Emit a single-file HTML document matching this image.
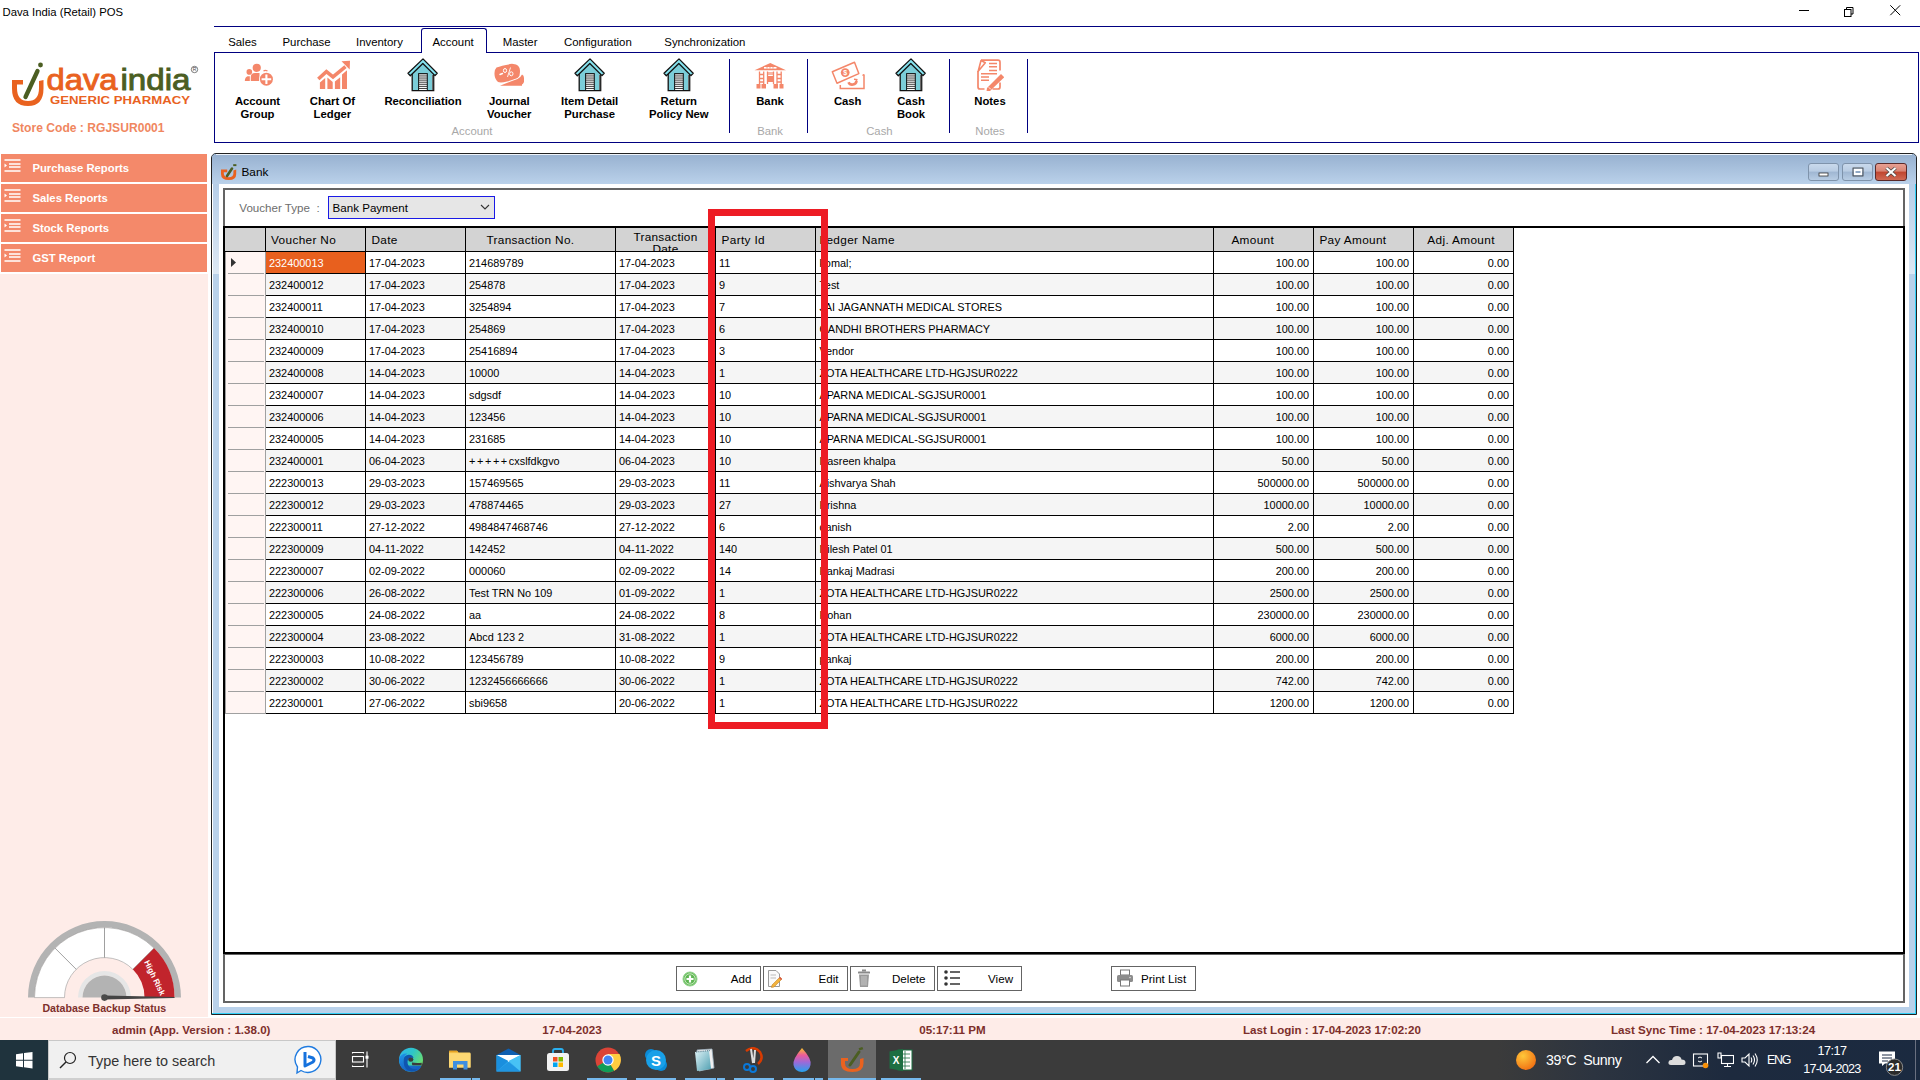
<!DOCTYPE html><html><head><meta charset="utf-8"><style>
html,body{margin:0;padding:0;width:1920px;height:1080px;overflow:hidden;background:#fff;}
body{position:relative;font-family:"Liberation Sans",sans-serif;}
.t{position:absolute;white-space:pre;}
.r{position:absolute;}
</style></head><body>
<div class="t" style="left:2.5px;top:6.73px;font-size:11.3px;line-height:11.3px;color:#000;font-weight:400;">Dava India (Retail) POS</div>
<div class="r" style="left:1799px;top:10px;width:10px;height:1px;background:#000"></div>
<svg class="r" style="left:1842px;top:4px" width="14" height="14" viewBox="0 0 14 14"><rect x="2.5" y="5.5" width="6.5" height="7" fill="none" stroke="#000" stroke-width="1"/><path d="M4.5 5.5 V3.5 H11 V10 H9" fill="none" stroke="#000" stroke-width="1"/></svg>
<svg class="r" style="left:1887px;top:3px" width="16" height="16" viewBox="0 0 16 16"><path d="M3.3 2.3 L13.2 12.2 M13.2 2.3 L3.3 12.2" stroke="#000" stroke-width="1"/></svg>
<div class="r" style="left:214px;top:26px;width:1706px;height:1px;background:#000080"></div>
<div class="r" style="left:214px;top:52px;width:1705px;height:91px;border:1px solid #000080;box-sizing:border-box;"></div>
<div class="r" style="left:421px;top:28px;width:66px;height:25px;border:1px solid #000080;border-bottom:none;border-radius:3px 3px 0 0;background:#fff;box-sizing:border-box"></div>
<div class="t" style="left:228.2px;top:36.95px;font-size:11.4px;line-height:11.4px;color:#000;font-weight:400;">Sales</div>
<div class="t" style="left:282.5px;top:36.95px;font-size:11.4px;line-height:11.4px;color:#000;font-weight:400;">Purchase</div>
<div class="t" style="left:356px;top:36.95px;font-size:11.4px;line-height:11.4px;color:#000;font-weight:400;">Inventory</div>
<div class="t" style="left:432.5px;top:36.95px;font-size:11.4px;line-height:11.4px;color:#000;font-weight:400;">Account</div>
<div class="t" style="left:502.7px;top:36.95px;font-size:11.4px;line-height:11.4px;color:#000;font-weight:400;">Master</div>
<div class="t" style="left:564px;top:36.95px;font-size:11.4px;line-height:11.4px;color:#000;font-weight:400;">Configuration</div>
<div class="t" style="left:664.3px;top:36.95px;font-size:11.4px;line-height:11.4px;color:#000;font-weight:400;">Synchronization</div>
<svg class="r" style="left:244px;top:61px" width="30" height="27" viewBox="0 0 30 27">
<circle cx="12.75" cy="6.8" r="4.1" fill="#f4876a"/>
<path d="M6.8 20 V16 Q6.8 12 11 12 H15.5 V20 Z" fill="#f4876a"/>
<circle cx="5.3" cy="10.9" r="2.8" fill="#f4876a"/>
<path d="M0.8 20 Q0.8 16.5 3.5 15.2 H5.8 V20 Z" fill="#f4876a"/>
<path d="M19.5 10.2 Q21 8.6 23.5 10" fill="none" stroke="#f4876a" stroke-width="1.2"/>
<circle cx="22.4" cy="18.2" r="7.4" fill="#fff"/>
<circle cx="22.4" cy="18.2" r="6.5" fill="#f4876a"/>
<path d="M22.4 13.4 V23 M17.6 18.2 H27.2" stroke="#fff" stroke-width="2.1"/></svg>
<svg class="r" style="left:317px;top:60px" width="34" height="30" viewBox="0 0 34 30">
<path d="M2.9 29 V22.5 L8.2 18 V29 Z M10.4 29 V17.5 L15.7 22 V29 Z M17.9 29 V21.5 L23.2 17.2 V29 Z M25 29 V14.5 L30 10.3 V29 Z" fill="#f4876a"/>
<path d="M1.3 19 L9.4 11.6 L16 16.9 L28.5 6.7" fill="none" stroke="#fff" stroke-width="6.5" stroke-linejoin="miter"/>
<path d="M1.3 19 L9.4 11.6 L16 16.9 L28.5 6.7" fill="none" stroke="#f4876a" stroke-width="3.6" stroke-linejoin="miter"/>
<path d="M24.5 1.3 L33 0.8 L32.7 9.5 Z" fill="#f4876a"/></svg>
<svg class="r" style="left:400px;top:55px" width="45" height="40" viewBox="0 0 45 40">
<path d="M12.2 17 L22.8 6.5 L33.7 17 V35.7 H12.2 Z" fill="#7bcdd8" stroke="#111" stroke-width="1.3"/>
<rect x="32" y="20" width="1.2" height="15" fill="#6a6a6a"/>
<path d="M8 18.3 L23 3.9 L37.2 18.2 L35 20.6 L22.8 8.5 L10.3 20.8 Z" fill="#86e3ef" stroke="#111" stroke-width="1.3" stroke-linejoin="round"/>
<rect x="18.1" y="18.1" width="9.7" height="17.6" fill="#111"/>
<rect x="19.1" y="19.30" width="7.7" height="1.25" fill="#fff"/><rect x="19.1" y="21.37" width="7.7" height="1.25" fill="#fff"/><rect x="19.1" y="23.44" width="7.7" height="1.25" fill="#fff"/><rect x="19.1" y="25.51" width="7.7" height="1.25" fill="#fff"/><rect x="19.1" y="27.58" width="7.7" height="1.25" fill="#fff"/><rect x="19.1" y="29.65" width="7.7" height="1.25" fill="#fff"/><rect x="19.1" y="31.72" width="7.7" height="1.25" fill="#fff"/><rect x="19.1" y="33.79" width="7.7" height="1.25" fill="#fff"/></svg>
<svg class="r" style="left:494px;top:63px" width="32" height="24" viewBox="0 0 32 24">
<path d="M2.5 4.5 Q8 2.5 18 0.8 L22 1.5 Q26 3 26 8 Q26 13 24 14.5 Q21 16.5 13 18.5 Q7 20 4 19 Q0.2 16 0.5 10 Q0.8 6 2.5 4.5 Z" fill="#f4876a"/>
<path d="M6 22.8 Q14 19.5 23.5 16 Q27 14 28 11.5 Q30 12 30 15 V19 Q29 21 28 21.5 V22.8 Z" fill="#f4876a"/>
<path d="M6 11.5 L8.5 10.5" stroke="#fff" stroke-width="1.4" stroke-linecap="round"/>
<ellipse cx="11" cy="7.5" rx="1.6" ry="2" fill="none" stroke="#fff" stroke-width="1"/>
<path d="M16.5 4.5 L13.5 14" stroke="#fff" stroke-width="0.9"/>
<ellipse cx="17.3" cy="10.8" rx="1.7" ry="2" fill="none" stroke="#fff" stroke-width="1"/></svg>
<svg class="r" style="left:567px;top:55px" width="45" height="40" viewBox="0 0 45 40">
<path d="M12.2 17 L22.8 6.5 L33.7 17 V35.7 H12.2 Z" fill="#7bcdd8" stroke="#111" stroke-width="1.3"/>
<rect x="32" y="20" width="1.2" height="15" fill="#6a6a6a"/>
<path d="M8 18.3 L23 3.9 L37.2 18.2 L35 20.6 L22.8 8.5 L10.3 20.8 Z" fill="#86e3ef" stroke="#111" stroke-width="1.3" stroke-linejoin="round"/>
<rect x="18.1" y="18.1" width="9.7" height="17.6" fill="#111"/>
<rect x="19.1" y="19.30" width="7.7" height="1.25" fill="#fff"/><rect x="19.1" y="21.37" width="7.7" height="1.25" fill="#fff"/><rect x="19.1" y="23.44" width="7.7" height="1.25" fill="#fff"/><rect x="19.1" y="25.51" width="7.7" height="1.25" fill="#fff"/><rect x="19.1" y="27.58" width="7.7" height="1.25" fill="#fff"/><rect x="19.1" y="29.65" width="7.7" height="1.25" fill="#fff"/><rect x="19.1" y="31.72" width="7.7" height="1.25" fill="#fff"/><rect x="19.1" y="33.79" width="7.7" height="1.25" fill="#fff"/></svg>
<svg class="r" style="left:656px;top:55px" width="45" height="40" viewBox="0 0 45 40">
<path d="M12.2 17 L22.8 6.5 L33.7 17 V35.7 H12.2 Z" fill="#7bcdd8" stroke="#111" stroke-width="1.3"/>
<rect x="32" y="20" width="1.2" height="15" fill="#6a6a6a"/>
<path d="M8 18.3 L23 3.9 L37.2 18.2 L35 20.6 L22.8 8.5 L10.3 20.8 Z" fill="#86e3ef" stroke="#111" stroke-width="1.3" stroke-linejoin="round"/>
<rect x="18.1" y="18.1" width="9.7" height="17.6" fill="#111"/>
<rect x="19.1" y="19.30" width="7.7" height="1.25" fill="#fff"/><rect x="19.1" y="21.37" width="7.7" height="1.25" fill="#fff"/><rect x="19.1" y="23.44" width="7.7" height="1.25" fill="#fff"/><rect x="19.1" y="25.51" width="7.7" height="1.25" fill="#fff"/><rect x="19.1" y="27.58" width="7.7" height="1.25" fill="#fff"/><rect x="19.1" y="29.65" width="7.7" height="1.25" fill="#fff"/><rect x="19.1" y="31.72" width="7.7" height="1.25" fill="#fff"/><rect x="19.1" y="33.79" width="7.7" height="1.25" fill="#fff"/></svg>
<svg class="r" style="left:754px;top:62px" width="32" height="27" viewBox="0 0 32 27">
<path d="M0.5 8.3 L16.3 1 L32 8.3 Z" fill="#f4876a"/>
<rect x="10" y="5" width="12.5" height="1.6" fill="#fff"/>
<path d="M13 5 V6.6 M16 5 V6.6 M19 5 V6.6" stroke="#f4876a" stroke-width="0.8"/>
<path d="M5.5 9.5 V22 M9.7 9.5 V22 M13.5 9.5 V22 M19.5 9.5 V22 M23 9.5 V22 M27.2 9.5 V22" stroke="#f4876a" stroke-width="1.3"/>
<path d="M5.5 12.5 H9.7 M5.5 16.5 H9.7 M5.5 20 H9.7 M23 12.5 H27.2 M23 16.5 H27.2 M23 20 H27.2" stroke="#f4876a" stroke-width="1.5"/>
<rect x="14" y="10" width="5.5" height="3" fill="#f4876a" opacity="0.6"/>
<rect x="14" y="14" width="5.5" height="6" fill="#f4876a"/>
<rect x="2.5" y="22" width="4" height="4.5" fill="#f4876a"/><rect x="7.5" y="22" width="4.5" height="4.5" fill="#f4876a"/>
<rect x="19.5" y="22" width="4.5" height="4.5" fill="#f4876a"/><rect x="25.5" y="22" width="4" height="4.5" fill="#f4876a"/></svg>
<svg class="r" style="left:830px;top:60px" width="35" height="30" viewBox="0 0 35 30">
<path d="M2.3 11.8 L24.5 2.3 L28.8 13.6 L7 23.3 Z" fill="#fff" stroke="#f4876a" stroke-width="1.5" stroke-linejoin="round"/>
<circle cx="15.2" cy="12.6" r="4.4" fill="#f4876a"/>
<text x="15.2" y="15.3" font-family="Liberation Sans" font-size="7" font-weight="700" fill="#fff" text-anchor="middle">$</text>
<path d="M10.3 25 V28.5 H34 V14.5" fill="none" stroke="#f4876a" stroke-width="1.5"/>
<path d="M32.5 15.5 L34 14.5" stroke="#f4876a" stroke-width="1.5"/>
<path d="M18.5 22.2 A4.2 4.2 0 0 0 26.5 20.8" fill="none" stroke="#f4876a" stroke-width="2.6"/>
<path d="M24 19.2 L26.8 19.6 L26 22.2" fill="none" stroke="#f4876a" stroke-width="1.4"/></svg>
<svg class="r" style="left:888px;top:55px" width="45" height="40" viewBox="0 0 45 40">
<path d="M12.2 17 L22.8 6.5 L33.7 17 V35.7 H12.2 Z" fill="#7bcdd8" stroke="#111" stroke-width="1.3"/>
<rect x="32" y="20" width="1.2" height="15" fill="#6a6a6a"/>
<path d="M8 18.3 L23 3.9 L37.2 18.2 L35 20.6 L22.8 8.5 L10.3 20.8 Z" fill="#86e3ef" stroke="#111" stroke-width="1.3" stroke-linejoin="round"/>
<rect x="18.1" y="18.1" width="9.7" height="17.6" fill="#111"/>
<rect x="19.1" y="19.30" width="7.7" height="1.25" fill="#fff"/><rect x="19.1" y="21.37" width="7.7" height="1.25" fill="#fff"/><rect x="19.1" y="23.44" width="7.7" height="1.25" fill="#fff"/><rect x="19.1" y="25.51" width="7.7" height="1.25" fill="#fff"/><rect x="19.1" y="27.58" width="7.7" height="1.25" fill="#fff"/><rect x="19.1" y="29.65" width="7.7" height="1.25" fill="#fff"/><rect x="19.1" y="31.72" width="7.7" height="1.25" fill="#fff"/><rect x="19.1" y="33.79" width="7.7" height="1.25" fill="#fff"/></svg>
<svg class="r" style="left:976px;top:59px" width="28" height="32" viewBox="0 0 28 32">
<path d="M5 1.2 H22 Q24 1.2 24 3.2 V11.5 M24 23.5 V28 Q24 30 22 30 H16.5 M8.5 30 H4 Q2 30 2 28 V12" fill="none" stroke="#f4876a" stroke-width="1.7"/>
<path d="M5 1.5 L9.3 3.7 L2.2 12.2 Z" fill="none" stroke="#f4876a" stroke-width="1.6" stroke-linejoin="round"/>
<path d="M13 4.5 H21 M13 7.8 H21 M13 11.5 H21 M5 14.8 H21 M5 18 H13 M5 21.2 H13" stroke="#f4876a" stroke-width="1.5"/>
<path d="M25 15 L28.2 18.2 L14 32 L10.5 32.5 L11 29 Z" fill="#f4876a"/>
<path d="M12.8 28.3 L14.8 30.3" stroke="#fff" stroke-width="0.9"/></svg>
<div class="t" style="left:197.50px;width:120px;text-align:center;top:96.43px;font-size:11.3px;line-height:11.3px;color:#000;font-weight:700;">Account</div>
<div class="t" style="left:197.50px;width:120px;text-align:center;top:109.23px;font-size:11.3px;line-height:11.3px;color:#000;font-weight:700;">Group</div>
<div class="t" style="left:272.40px;width:120px;text-align:center;top:96.43px;font-size:11.3px;line-height:11.3px;color:#000;font-weight:700;">Chart Of</div>
<div class="t" style="left:272.40px;width:120px;text-align:center;top:109.23px;font-size:11.3px;line-height:11.3px;color:#000;font-weight:700;">Ledger</div>
<div class="t" style="left:363.00px;width:120px;text-align:center;top:96.43px;font-size:11.3px;line-height:11.3px;color:#000;font-weight:700;">Reconciliation</div>
<div class="t" style="left:449.30px;width:120px;text-align:center;top:96.43px;font-size:11.3px;line-height:11.3px;color:#000;font-weight:700;">Journal</div>
<div class="t" style="left:449.30px;width:120px;text-align:center;top:109.23px;font-size:11.3px;line-height:11.3px;color:#000;font-weight:700;">Voucher</div>
<div class="t" style="left:529.70px;width:120px;text-align:center;top:96.43px;font-size:11.3px;line-height:11.3px;color:#000;font-weight:700;">Item Detail</div>
<div class="t" style="left:529.70px;width:120px;text-align:center;top:109.23px;font-size:11.3px;line-height:11.3px;color:#000;font-weight:700;">Purchase</div>
<div class="t" style="left:618.80px;width:120px;text-align:center;top:96.43px;font-size:11.3px;line-height:11.3px;color:#000;font-weight:700;">Return</div>
<div class="t" style="left:618.80px;width:120px;text-align:center;top:109.23px;font-size:11.3px;line-height:11.3px;color:#000;font-weight:700;">Policy New</div>
<div class="t" style="left:710.00px;width:120px;text-align:center;top:96.43px;font-size:11.3px;line-height:11.3px;color:#000;font-weight:700;">Bank</div>
<div class="t" style="left:787.70px;width:120px;text-align:center;top:96.43px;font-size:11.3px;line-height:11.3px;color:#000;font-weight:700;">Cash</div>
<div class="t" style="left:851.00px;width:120px;text-align:center;top:96.43px;font-size:11.3px;line-height:11.3px;color:#000;font-weight:700;">Cash</div>
<div class="t" style="left:851.00px;width:120px;text-align:center;top:109.23px;font-size:11.3px;line-height:11.3px;color:#000;font-weight:700;">Book</div>
<div class="t" style="left:930.00px;width:120px;text-align:center;top:96.43px;font-size:11.3px;line-height:11.3px;color:#000;font-weight:700;">Notes</div>
<div class="r" style="left:729px;top:59px;width:1px;height:74px;background:#000080"></div>
<div class="r" style="left:807px;top:59px;width:1px;height:74px;background:#000080"></div>
<div class="r" style="left:949px;top:59px;width:1px;height:74px;background:#000080"></div>
<div class="r" style="left:1027px;top:59px;width:1px;height:74px;background:#000080"></div>
<div class="t" style="left:412.00px;width:120px;text-align:center;top:126.43px;font-size:11.3px;line-height:11.3px;color:#a8a8a8;font-weight:400;">Account</div>
<div class="t" style="left:710.00px;width:120px;text-align:center;top:126.43px;font-size:11.3px;line-height:11.3px;color:#a8a8a8;font-weight:400;">Bank</div>
<div class="t" style="left:819.40px;width:120px;text-align:center;top:126.43px;font-size:11.3px;line-height:11.3px;color:#a8a8a8;font-weight:400;">Cash</div>
<div class="t" style="left:930.00px;width:120px;text-align:center;top:126.43px;font-size:11.3px;line-height:11.3px;color:#a8a8a8;font-weight:400;">Notes</div>
<svg class="r" style="left:8px;top:60px" width="200" height="50" viewBox="0 0 200 50">
<path d="M4 20 H15 V24.5 H9 V28 Q9 41 20 41 Q31 41 31 28 V21 L35.5 20 V28.5 Q35.5 46 20 46 Q4 46 4 28.5 Z" fill="#e9621f"/>
<path d="M17.5 37 L29.5 11" stroke="#4b5e22" stroke-width="4.3" stroke-linecap="round"/>
<circle cx="32.5" cy="5" r="2.4" fill="#4b5e22"/>
<text x="38.5" y="30" font-family="Liberation Sans" font-size="29" font-weight="400" fill="#e9621f" stroke="#e9621f" stroke-width="0.9" textLength="71" lengthAdjust="spacingAndGlyphs">dava</text>
<text x="112.5" y="30" font-family="Liberation Sans" font-size="29" font-weight="400" fill="#4b5e22" stroke="#4b5e22" stroke-width="0.9" textLength="70" lengthAdjust="spacingAndGlyphs">india</text>
<text x="42" y="43.8" font-family="Liberation Sans" font-size="10.4" font-weight="700" fill="#e9621f" textLength="140" lengthAdjust="spacingAndGlyphs">GENERIC PHARMACY</text>
<circle cx="186.5" cy="9.5" r="3.2" fill="none" stroke="#444" stroke-width="0.7"/><text x="186.5" y="11.4" font-family="Liberation Sans" font-size="5" fill="#444" text-anchor="middle">R</text></svg>
<div class="t" style="left:12px;top:122.46px;font-size:12.1px;line-height:12.1px;color:#f0875f;font-weight:700;">Store Code : RGJSUR0001</div>
<div class="r" style="left:0px;top:274px;width:208px;height:743px;background:#feece8"></div>
<div class="r" style="left:1px;top:154px;width:206px;height:27.7px;background:#f4896a"></div>
<svg class="r" style="left:3.5px;top:159px" width="18" height="14" viewBox="0 0 18 14"><path d="M0.5 1 H16.5 M5 5 H16.5 M5 8 H16.5 M0.5 12 H16.5" stroke="#fff" stroke-width="1.3"/><path d="M0.5 4.5 L3 6.5 L0.5 8.5 Z" fill="#fff"/></svg>
<div class="t" style="left:32.4px;top:163.03px;font-size:11.3px;line-height:11.3px;color:#fff;font-weight:700;">Purchase Reports</div>
<div class="r" style="left:1px;top:184px;width:206px;height:27.7px;background:#f4896a"></div>
<svg class="r" style="left:3.5px;top:189px" width="18" height="14" viewBox="0 0 18 14"><path d="M0.5 1 H16.5 M5 5 H16.5 M5 8 H16.5 M0.5 12 H16.5" stroke="#fff" stroke-width="1.3"/><path d="M0.5 4.5 L3 6.5 L0.5 8.5 Z" fill="#fff"/></svg>
<div class="t" style="left:32.4px;top:193.03px;font-size:11.3px;line-height:11.3px;color:#fff;font-weight:700;">Sales Reports</div>
<div class="r" style="left:1px;top:214px;width:206px;height:27.7px;background:#f4896a"></div>
<svg class="r" style="left:3.5px;top:219px" width="18" height="14" viewBox="0 0 18 14"><path d="M0.5 1 H16.5 M5 5 H16.5 M5 8 H16.5 M0.5 12 H16.5" stroke="#fff" stroke-width="1.3"/><path d="M0.5 4.5 L3 6.5 L0.5 8.5 Z" fill="#fff"/></svg>
<div class="t" style="left:32.4px;top:223.03px;font-size:11.3px;line-height:11.3px;color:#fff;font-weight:700;">Stock Reports</div>
<div class="r" style="left:1px;top:244px;width:206px;height:27.7px;background:#f4896a"></div>
<svg class="r" style="left:3.5px;top:249px" width="18" height="14" viewBox="0 0 18 14"><path d="M0.5 1 H16.5 M5 5 H16.5 M5 8 H16.5 M0.5 12 H16.5" stroke="#fff" stroke-width="1.3"/><path d="M0.5 4.5 L3 6.5 L0.5 8.5 Z" fill="#fff"/></svg>
<div class="t" style="left:32.4px;top:253.03px;font-size:11.3px;line-height:11.3px;color:#fff;font-weight:700;">GST Report</div>
<svg class="r" style="left:8px;top:910px" width="194" height="92" viewBox="0 0 194 92"><path d="M173.00 87.60 A76.5 76.5 0 0 0 20.00 87.60 L26.50 87.60 A70 70 0 0 1 166.50 87.60 Z" fill="#b3b3b3"/><path d="M146.00 38.10 A70 70 0 0 0 26.50 87.60 L56.50 87.60 A40 40 0 0 1 124.78 59.32 Z" fill="#fff"/><path d="M166.50 87.60 A70 70 0 0 0 146.00 38.10 L124.78 59.32 A40 40 0 0 1 136.50 87.60 Z" fill="#c1242c"/><path d="M146.00 38.10 A70 70 0 0 0 26.50 87.60 L56.50 87.60 A40 40 0 0 1 124.78 59.32 Z" fill="none" stroke="#999" stroke-width="0.6"/><line x1="96.50" y1="47.60" x2="96.50" y2="17.60" stroke="#888" stroke-width="0.8"/><line x1="68.22" y1="59.32" x2="47.00" y2="38.10" stroke="#888" stroke-width="0.8"/><path d="M123.00 87.60 A26.5 26.5 0 0 0 70.00 87.60 L74.50 87.60 A22 22 0 0 1 118.50 87.60 Z" fill="#e6e6e6"/><path d="M118.50 87.60 A22 22 0 0 0 74.50 87.60 L96.49 87.60 A0.01 0.01 0 0 1 96.51 87.60 Z" fill="#b3b3b3"/><path d="M96.5 85.40000000000002 L166.5 87.00000000000003 L166.5 87.90000000000002 L96.5 89.40000000000002 Z" fill="#444"/><circle cx="96.5" cy="87.60000000000002" r="3.3" fill="#4a4a4a"/><text font-family="Liberation Sans" font-size="8.2" font-weight="700" fill="#fff" text-anchor="middle" transform="translate(147.0,67.70000000000002) rotate(64)" dy="3">High Risk</text></svg>
<div class="t" style="left:4.30px;width:200px;text-align:center;top:1003.43px;font-size:10.6px;line-height:10.6px;color:#7d2f2b;font-weight:700;">Database Backup Status</div>
<div class="r" style="left:211px;top:153px;width:1706px;height:862px;box-sizing:border-box;border:1px solid #222;border-radius:5px 5px 0 0;background:#b9d1ea;"></div>
<div class="r" style="left:212px;top:154px;width:1704px;height:30px;border-radius:4px 4px 0 0;background:linear-gradient(#97b1d0,#bad1ea);"></div>
<div class="r" style="left:216px;top:154px;width:1696px;height:1px;background:#eef3fa"></div>
<div class="r" style="left:213px;top:184px;width:6px;height:90px;background:linear-gradient(#b6cee8,#dde8f4)"></div>
<div class="r" style="left:212px;top:184px;width:1px;height:830px;background:#fff"></div>
<div class="r" style="left:1909px;top:184px;width:7px;height:90px;background:linear-gradient(#b6cee8,#dde8f4)"></div>
<div class="r" style="left:212px;top:1013px;width:1704px;height:1px;background:#30d0f8"></div>
<div class="r" style="left:1915px;top:184px;width:1px;height:830px;background:#30d0f8"></div>
<div class="r" style="left:219px;top:184px;width:1690px;height:823px;background:#fff"></div>
<svg class="r" style="left:220px;top:163px" width="18" height="18" viewBox="0 0 18 18"><path d="M1 6.6 H7.2 V9.2 H3.8 V10.5 Q3.8 14.2 8.8 14.2 Q13.4 14.2 13.4 10.5 V7.6 L16.2 6.6 V11 Q16.2 17 8.8 17 Q1 17 1 11 Z" fill="#e9621f"/>
<path d="M7 13 L12 5.6" stroke="#4b5e22" stroke-width="2.6" stroke-linecap="round"/><rect x="13.2" y="1.2" width="3.2" height="1.9" fill="#4b5e22"/></svg>
<div class="t" style="left:241.5px;top:167.41px;font-size:11.8px;line-height:11.8px;color:#000;font-weight:400;">Bank</div>
<div class="r" style="left:1808px;top:163px;width:31px;height:18px;box-sizing:border-box;border:1px solid #7f93ab;border-radius:3px;background:linear-gradient(#c9d9ec 0%,#b9cce3 45%,#9fb6d2 50%,#b8cde4 100%);"></div>
<svg class="r" style="left:1808px;top:163px" width="31" height="18" viewBox="0 0 31 18"><rect x="11" y="10" width="9" height="3" fill="#fff" stroke="#333" stroke-width="0.8"/></svg>
<div class="r" style="left:1842px;top:163px;width:31px;height:18px;box-sizing:border-box;border:1px solid #7f93ab;border-radius:3px;background:linear-gradient(#c9d9ec 0%,#b9cce3 45%,#9fb6d2 50%,#b8cde4 100%);"></div>
<svg class="r" style="left:1842px;top:163px" width="31" height="18" viewBox="0 0 31 18"><rect x="11" y="5" width="10" height="8" fill="none" stroke="#333" stroke-width="0.8"/><rect x="12" y="6" width="8" height="6" fill="#fff" stroke="#333" stroke-width="0.0"/><rect x="13.5" y="8" width="5" height="2" fill="#8fa8c5"/></svg>
<div class="r" style="left:1875px;top:163px;width:32px;height:18px;box-sizing:border-box;border:1px solid #5a2a2a;border-radius:3px;background:linear-gradient(#e8a093 0%,#d88474 45%,#c0452f 50%,#cf6a55 100%);"></div>
<svg class="r" style="left:1875px;top:163px" width="32" height="18" viewBox="0 0 32 18"><path d="M11.5 5 L20.5 13 M20.5 5 L11.5 13" stroke="#444" stroke-width="3.6"/><path d="M11.5 5 L20.5 13 M20.5 5 L11.5 13" stroke="#fff" stroke-width="2.2"/></svg>
<div class="r" style="left:223px;top:188px;width:1682px;height:40px;box-sizing:border-box;border:2px solid #646464;border-bottom:none;"></div>
<div class="t" style="left:239.3px;top:202.48px;font-size:11.6px;line-height:11.6px;color:#6d6d6d;font-weight:400;">Voucher Type  :</div>
<div class="r" style="left:328px;top:196px;width:167px;height:23px;box-sizing:border-box;border:1.5px solid #1a1ae6;background:#e6e6e6;"></div>
<div class="t" style="left:332.5px;top:202.48px;font-size:11.6px;line-height:11.6px;color:#000;font-weight:400;">Bank Payment</div>
<svg class="r" style="left:478px;top:202px" width="14" height="10" viewBox="0 0 14 10"><path d="M3 3 L7 7 L11 3" fill="none" stroke="#333" stroke-width="1.1"/></svg>
<div class="r" style="left:223px;top:226px;width:1682px;height:728px;box-sizing:border-box;border-left:2px solid #000;border-right:2px solid #000;border-top:2px solid #000;border-bottom:2px solid #000;background:#fff"></div>
<div class="r" style="left:225px;top:228px;width:1289px;height:23px;background:#d3d3d3"></div>
<div class="r" style="left:225px;top:251px;width:1289px;height:1px;background:#000"></div>
<div class="r" style="left:266px;top:273px;width:1248px;height:1px;background:#000"></div>
<div class="r" style="left:266px;top:274px;width:1247px;height:21px;background:#f5f5f5"></div>
<div class="r" style="left:266px;top:295px;width:1248px;height:1px;background:#000"></div>
<div class="r" style="left:266px;top:317px;width:1248px;height:1px;background:#000"></div>
<div class="r" style="left:266px;top:318px;width:1247px;height:21px;background:#f5f5f5"></div>
<div class="r" style="left:266px;top:339px;width:1248px;height:1px;background:#000"></div>
<div class="r" style="left:266px;top:361px;width:1248px;height:1px;background:#000"></div>
<div class="r" style="left:266px;top:362px;width:1247px;height:21px;background:#f5f5f5"></div>
<div class="r" style="left:266px;top:383px;width:1248px;height:1px;background:#000"></div>
<div class="r" style="left:266px;top:405px;width:1248px;height:1px;background:#000"></div>
<div class="r" style="left:266px;top:406px;width:1247px;height:21px;background:#f5f5f5"></div>
<div class="r" style="left:266px;top:427px;width:1248px;height:1px;background:#000"></div>
<div class="r" style="left:266px;top:449px;width:1248px;height:1px;background:#000"></div>
<div class="r" style="left:266px;top:450px;width:1247px;height:21px;background:#f5f5f5"></div>
<div class="r" style="left:266px;top:471px;width:1248px;height:1px;background:#000"></div>
<div class="r" style="left:266px;top:493px;width:1248px;height:1px;background:#000"></div>
<div class="r" style="left:266px;top:494px;width:1247px;height:21px;background:#f5f5f5"></div>
<div class="r" style="left:266px;top:515px;width:1248px;height:1px;background:#000"></div>
<div class="r" style="left:266px;top:537px;width:1248px;height:1px;background:#000"></div>
<div class="r" style="left:266px;top:538px;width:1247px;height:21px;background:#f5f5f5"></div>
<div class="r" style="left:266px;top:559px;width:1248px;height:1px;background:#000"></div>
<div class="r" style="left:266px;top:581px;width:1248px;height:1px;background:#000"></div>
<div class="r" style="left:266px;top:582px;width:1247px;height:21px;background:#f5f5f5"></div>
<div class="r" style="left:266px;top:603px;width:1248px;height:1px;background:#000"></div>
<div class="r" style="left:266px;top:625px;width:1248px;height:1px;background:#000"></div>
<div class="r" style="left:266px;top:626px;width:1247px;height:21px;background:#f5f5f5"></div>
<div class="r" style="left:266px;top:647px;width:1248px;height:1px;background:#000"></div>
<div class="r" style="left:266px;top:669px;width:1248px;height:1px;background:#000"></div>
<div class="r" style="left:266px;top:670px;width:1247px;height:21px;background:#f5f5f5"></div>
<div class="r" style="left:266px;top:691px;width:1248px;height:1px;background:#000"></div>
<div class="r" style="left:266px;top:713px;width:1248px;height:1px;background:#000"></div>
<div class="r" style="left:225px;top:252px;width:40px;height:462px;background:#fff5f3;box-sizing:border-box;border-left:1px solid #a0a0a0;"></div>
<div class="r" style="left:228px;top:273px;width:36px;height:1px;background:#a0a0a0"></div>
<div class="r" style="left:228px;top:295px;width:36px;height:1px;background:#a0a0a0"></div>
<div class="r" style="left:228px;top:317px;width:36px;height:1px;background:#a0a0a0"></div>
<div class="r" style="left:228px;top:339px;width:36px;height:1px;background:#a0a0a0"></div>
<div class="r" style="left:228px;top:361px;width:36px;height:1px;background:#a0a0a0"></div>
<div class="r" style="left:228px;top:383px;width:36px;height:1px;background:#a0a0a0"></div>
<div class="r" style="left:228px;top:405px;width:36px;height:1px;background:#a0a0a0"></div>
<div class="r" style="left:228px;top:427px;width:36px;height:1px;background:#a0a0a0"></div>
<div class="r" style="left:228px;top:449px;width:36px;height:1px;background:#a0a0a0"></div>
<div class="r" style="left:228px;top:471px;width:36px;height:1px;background:#a0a0a0"></div>
<div class="r" style="left:228px;top:493px;width:36px;height:1px;background:#a0a0a0"></div>
<div class="r" style="left:228px;top:515px;width:36px;height:1px;background:#a0a0a0"></div>
<div class="r" style="left:228px;top:537px;width:36px;height:1px;background:#a0a0a0"></div>
<div class="r" style="left:228px;top:559px;width:36px;height:1px;background:#a0a0a0"></div>
<div class="r" style="left:228px;top:581px;width:36px;height:1px;background:#a0a0a0"></div>
<div class="r" style="left:228px;top:603px;width:36px;height:1px;background:#a0a0a0"></div>
<div class="r" style="left:228px;top:625px;width:36px;height:1px;background:#a0a0a0"></div>
<div class="r" style="left:228px;top:647px;width:36px;height:1px;background:#a0a0a0"></div>
<div class="r" style="left:228px;top:669px;width:36px;height:1px;background:#a0a0a0"></div>
<div class="r" style="left:228px;top:691px;width:36px;height:1px;background:#a0a0a0"></div>
<div class="r" style="left:228px;top:713px;width:36px;height:1px;background:#a0a0a0"></div>
<div class="r" style="left:225px;top:713px;width:40px;height:1px;background:#a0a0a0"></div>
<div class="r" style="left:265px;top:228px;width:1px;height:23px;background:#000"></div>
<div class="r" style="left:265px;top:252px;width:1px;height:462px;background:#a0a0a0"></div>
<div class="r" style="left:365px;top:228px;width:1px;height:485px;background:#000"></div>
<div class="r" style="left:465px;top:228px;width:1px;height:485px;background:#000"></div>
<div class="r" style="left:615px;top:228px;width:1px;height:485px;background:#000"></div>
<div class="r" style="left:715px;top:228px;width:1px;height:485px;background:#000"></div>
<div class="r" style="left:815px;top:228px;width:1px;height:485px;background:#000"></div>
<div class="r" style="left:1213px;top:228px;width:1px;height:485px;background:#000"></div>
<div class="r" style="left:1313px;top:228px;width:1px;height:485px;background:#000"></div>
<div class="r" style="left:1413px;top:228px;width:1px;height:485px;background:#000"></div>
<div class="r" style="left:1513px;top:228px;width:1px;height:485px;background:#000"></div>
<div class="r" style="left:266px;top:252px;width:99px;height:21px;background:#e8601e"></div>
<svg class="r" style="left:230px;top:257px" width="8" height="11" viewBox="0 0 8 11"><path d="M1 1 L6 5.5 L1 10 Z" fill="#333"/></svg>
<div class="t" style="left:271px;top:235.01px;font-size:11.8px;line-height:11.8px;color:#000;font-weight:400;letter-spacing:0.35px">Voucher No</div>
<div class="t" style="left:371.4px;top:235.01px;font-size:11.8px;line-height:11.8px;color:#000;font-weight:400;letter-spacing:0.35px">Date</div>
<div class="t" style="left:486.4px;top:235.01px;font-size:11.8px;line-height:11.8px;color:#000;font-weight:400;letter-spacing:0.35px">Transaction No.</div>
<div class="r" style="left:616px;top:228px;width:99px;height:23px;overflow:hidden"><div class="t" style="left:0;width:99px;text-align:center;top:2.95px;font-size:11.8px;line-height:12.5px;letter-spacing:0.25px">Transaction
Date</div></div>
<div class="t" style="left:721.5px;top:235.01px;font-size:11.8px;line-height:11.8px;color:#000;font-weight:400;letter-spacing:0.35px">Party Id</div>
<div class="t" style="left:819.5px;top:235.01px;font-size:11.8px;line-height:11.8px;color:#000;font-weight:400;letter-spacing:0.35px">Ledger Name</div>
<div class="t" style="left:1231.4px;top:235.01px;font-size:11.8px;line-height:11.8px;color:#000;font-weight:400;letter-spacing:0.35px">Amount</div>
<div class="t" style="left:1319.4px;top:235.01px;font-size:11.8px;line-height:11.8px;color:#000;font-weight:400;letter-spacing:0.35px">Pay Amount</div>
<div class="t" style="left:1427.3px;top:235.01px;font-size:11.8px;line-height:11.8px;color:#000;font-weight:400;letter-spacing:0.35px">Adj. Amount</div>
<div class="t" style="left:269px;top:257.67px;font-size:10.9px;line-height:10.9px;color:#fff;font-weight:400;">232400013</div>
<div class="t" style="left:369px;top:257.67px;font-size:10.9px;line-height:10.9px;color:#000;font-weight:400;">17-04-2023</div>
<div class="t" style="left:469px;top:257.67px;font-size:10.9px;line-height:10.9px;color:#000;font-weight:400;">214689789</div>
<div class="t" style="left:619px;top:257.67px;font-size:10.9px;line-height:10.9px;color:#000;font-weight:400;">17-04-2023</div>
<div class="t" style="left:719px;top:257.67px;font-size:10.9px;line-height:10.9px;color:#000;font-weight:400;">11</div>
<div class="t" style="left:819.4px;top:257.67px;font-size:10.9px;line-height:10.9px;color:#000;font-weight:400;">komal;</div>
<div class="t" style="left:1219.00px;width:90px;text-align:right;top:257.67px;font-size:10.9px;line-height:10.9px;color:#000;font-weight:400;">100.00</div>
<div class="t" style="left:1319.00px;width:90px;text-align:right;top:257.67px;font-size:10.9px;line-height:10.9px;color:#000;font-weight:400;">100.00</div>
<div class="t" style="left:1419.00px;width:90px;text-align:right;top:257.67px;font-size:10.9px;line-height:10.9px;color:#000;font-weight:400;">0.00</div>
<div class="t" style="left:269px;top:279.67px;font-size:10.9px;line-height:10.9px;color:#000;font-weight:400;">232400012</div>
<div class="t" style="left:369px;top:279.67px;font-size:10.9px;line-height:10.9px;color:#000;font-weight:400;">17-04-2023</div>
<div class="t" style="left:469px;top:279.67px;font-size:10.9px;line-height:10.9px;color:#000;font-weight:400;">254878</div>
<div class="t" style="left:619px;top:279.67px;font-size:10.9px;line-height:10.9px;color:#000;font-weight:400;">17-04-2023</div>
<div class="t" style="left:719px;top:279.67px;font-size:10.9px;line-height:10.9px;color:#000;font-weight:400;">9</div>
<div class="t" style="left:819.4px;top:279.67px;font-size:10.9px;line-height:10.9px;color:#000;font-weight:400;">Test</div>
<div class="t" style="left:1219.00px;width:90px;text-align:right;top:279.67px;font-size:10.9px;line-height:10.9px;color:#000;font-weight:400;">100.00</div>
<div class="t" style="left:1319.00px;width:90px;text-align:right;top:279.67px;font-size:10.9px;line-height:10.9px;color:#000;font-weight:400;">100.00</div>
<div class="t" style="left:1419.00px;width:90px;text-align:right;top:279.67px;font-size:10.9px;line-height:10.9px;color:#000;font-weight:400;">0.00</div>
<div class="t" style="left:269px;top:301.67px;font-size:10.9px;line-height:10.9px;color:#000;font-weight:400;">232400011</div>
<div class="t" style="left:369px;top:301.67px;font-size:10.9px;line-height:10.9px;color:#000;font-weight:400;">17-04-2023</div>
<div class="t" style="left:469px;top:301.67px;font-size:10.9px;line-height:10.9px;color:#000;font-weight:400;">3254894</div>
<div class="t" style="left:619px;top:301.67px;font-size:10.9px;line-height:10.9px;color:#000;font-weight:400;">17-04-2023</div>
<div class="t" style="left:719px;top:301.67px;font-size:10.9px;line-height:10.9px;color:#000;font-weight:400;">7</div>
<div class="t" style="left:819.4px;top:301.67px;font-size:10.9px;line-height:10.9px;color:#000;font-weight:400;">JAI JAGANNATH MEDICAL STORES</div>
<div class="t" style="left:1219.00px;width:90px;text-align:right;top:301.67px;font-size:10.9px;line-height:10.9px;color:#000;font-weight:400;">100.00</div>
<div class="t" style="left:1319.00px;width:90px;text-align:right;top:301.67px;font-size:10.9px;line-height:10.9px;color:#000;font-weight:400;">100.00</div>
<div class="t" style="left:1419.00px;width:90px;text-align:right;top:301.67px;font-size:10.9px;line-height:10.9px;color:#000;font-weight:400;">0.00</div>
<div class="t" style="left:269px;top:323.67px;font-size:10.9px;line-height:10.9px;color:#000;font-weight:400;">232400010</div>
<div class="t" style="left:369px;top:323.67px;font-size:10.9px;line-height:10.9px;color:#000;font-weight:400;">17-04-2023</div>
<div class="t" style="left:469px;top:323.67px;font-size:10.9px;line-height:10.9px;color:#000;font-weight:400;">254869</div>
<div class="t" style="left:619px;top:323.67px;font-size:10.9px;line-height:10.9px;color:#000;font-weight:400;">17-04-2023</div>
<div class="t" style="left:719px;top:323.67px;font-size:10.9px;line-height:10.9px;color:#000;font-weight:400;">6</div>
<div class="t" style="left:819.4px;top:323.67px;font-size:10.9px;line-height:10.9px;color:#000;font-weight:400;">GANDHI BROTHERS PHARMACY</div>
<div class="t" style="left:1219.00px;width:90px;text-align:right;top:323.67px;font-size:10.9px;line-height:10.9px;color:#000;font-weight:400;">100.00</div>
<div class="t" style="left:1319.00px;width:90px;text-align:right;top:323.67px;font-size:10.9px;line-height:10.9px;color:#000;font-weight:400;">100.00</div>
<div class="t" style="left:1419.00px;width:90px;text-align:right;top:323.67px;font-size:10.9px;line-height:10.9px;color:#000;font-weight:400;">0.00</div>
<div class="t" style="left:269px;top:345.67px;font-size:10.9px;line-height:10.9px;color:#000;font-weight:400;">232400009</div>
<div class="t" style="left:369px;top:345.67px;font-size:10.9px;line-height:10.9px;color:#000;font-weight:400;">17-04-2023</div>
<div class="t" style="left:469px;top:345.67px;font-size:10.9px;line-height:10.9px;color:#000;font-weight:400;">25416894</div>
<div class="t" style="left:619px;top:345.67px;font-size:10.9px;line-height:10.9px;color:#000;font-weight:400;">17-04-2023</div>
<div class="t" style="left:719px;top:345.67px;font-size:10.9px;line-height:10.9px;color:#000;font-weight:400;">3</div>
<div class="t" style="left:819.4px;top:345.67px;font-size:10.9px;line-height:10.9px;color:#000;font-weight:400;">Vendor</div>
<div class="t" style="left:1219.00px;width:90px;text-align:right;top:345.67px;font-size:10.9px;line-height:10.9px;color:#000;font-weight:400;">100.00</div>
<div class="t" style="left:1319.00px;width:90px;text-align:right;top:345.67px;font-size:10.9px;line-height:10.9px;color:#000;font-weight:400;">100.00</div>
<div class="t" style="left:1419.00px;width:90px;text-align:right;top:345.67px;font-size:10.9px;line-height:10.9px;color:#000;font-weight:400;">0.00</div>
<div class="t" style="left:269px;top:367.67px;font-size:10.9px;line-height:10.9px;color:#000;font-weight:400;">232400008</div>
<div class="t" style="left:369px;top:367.67px;font-size:10.9px;line-height:10.9px;color:#000;font-weight:400;">14-04-2023</div>
<div class="t" style="left:469px;top:367.67px;font-size:10.9px;line-height:10.9px;color:#000;font-weight:400;">10000</div>
<div class="t" style="left:619px;top:367.67px;font-size:10.9px;line-height:10.9px;color:#000;font-weight:400;">14-04-2023</div>
<div class="t" style="left:719px;top:367.67px;font-size:10.9px;line-height:10.9px;color:#000;font-weight:400;">1</div>
<div class="t" style="left:819.4px;top:367.67px;font-size:10.9px;line-height:10.9px;color:#000;font-weight:400;">ZOTA HEALTHCARE LTD-HGJSUR0222</div>
<div class="t" style="left:1219.00px;width:90px;text-align:right;top:367.67px;font-size:10.9px;line-height:10.9px;color:#000;font-weight:400;">100.00</div>
<div class="t" style="left:1319.00px;width:90px;text-align:right;top:367.67px;font-size:10.9px;line-height:10.9px;color:#000;font-weight:400;">100.00</div>
<div class="t" style="left:1419.00px;width:90px;text-align:right;top:367.67px;font-size:10.9px;line-height:10.9px;color:#000;font-weight:400;">0.00</div>
<div class="t" style="left:269px;top:389.67px;font-size:10.9px;line-height:10.9px;color:#000;font-weight:400;">232400007</div>
<div class="t" style="left:369px;top:389.67px;font-size:10.9px;line-height:10.9px;color:#000;font-weight:400;">14-04-2023</div>
<div class="t" style="left:469px;top:389.67px;font-size:10.9px;line-height:10.9px;color:#000;font-weight:400;">sdgsdf</div>
<div class="t" style="left:619px;top:389.67px;font-size:10.9px;line-height:10.9px;color:#000;font-weight:400;">14-04-2023</div>
<div class="t" style="left:719px;top:389.67px;font-size:10.9px;line-height:10.9px;color:#000;font-weight:400;">10</div>
<div class="t" style="left:819.4px;top:389.67px;font-size:10.9px;line-height:10.9px;color:#000;font-weight:400;">APARNA MEDICAL-SGJSUR0001</div>
<div class="t" style="left:1219.00px;width:90px;text-align:right;top:389.67px;font-size:10.9px;line-height:10.9px;color:#000;font-weight:400;">100.00</div>
<div class="t" style="left:1319.00px;width:90px;text-align:right;top:389.67px;font-size:10.9px;line-height:10.9px;color:#000;font-weight:400;">100.00</div>
<div class="t" style="left:1419.00px;width:90px;text-align:right;top:389.67px;font-size:10.9px;line-height:10.9px;color:#000;font-weight:400;">0.00</div>
<div class="t" style="left:269px;top:411.67px;font-size:10.9px;line-height:10.9px;color:#000;font-weight:400;">232400006</div>
<div class="t" style="left:369px;top:411.67px;font-size:10.9px;line-height:10.9px;color:#000;font-weight:400;">14-04-2023</div>
<div class="t" style="left:469px;top:411.67px;font-size:10.9px;line-height:10.9px;color:#000;font-weight:400;">123456</div>
<div class="t" style="left:619px;top:411.67px;font-size:10.9px;line-height:10.9px;color:#000;font-weight:400;">14-04-2023</div>
<div class="t" style="left:719px;top:411.67px;font-size:10.9px;line-height:10.9px;color:#000;font-weight:400;">10</div>
<div class="t" style="left:819.4px;top:411.67px;font-size:10.9px;line-height:10.9px;color:#000;font-weight:400;">APARNA MEDICAL-SGJSUR0001</div>
<div class="t" style="left:1219.00px;width:90px;text-align:right;top:411.67px;font-size:10.9px;line-height:10.9px;color:#000;font-weight:400;">100.00</div>
<div class="t" style="left:1319.00px;width:90px;text-align:right;top:411.67px;font-size:10.9px;line-height:10.9px;color:#000;font-weight:400;">100.00</div>
<div class="t" style="left:1419.00px;width:90px;text-align:right;top:411.67px;font-size:10.9px;line-height:10.9px;color:#000;font-weight:400;">0.00</div>
<div class="t" style="left:269px;top:433.67px;font-size:10.9px;line-height:10.9px;color:#000;font-weight:400;">232400005</div>
<div class="t" style="left:369px;top:433.67px;font-size:10.9px;line-height:10.9px;color:#000;font-weight:400;">14-04-2023</div>
<div class="t" style="left:469px;top:433.67px;font-size:10.9px;line-height:10.9px;color:#000;font-weight:400;">231685</div>
<div class="t" style="left:619px;top:433.67px;font-size:10.9px;line-height:10.9px;color:#000;font-weight:400;">14-04-2023</div>
<div class="t" style="left:719px;top:433.67px;font-size:10.9px;line-height:10.9px;color:#000;font-weight:400;">10</div>
<div class="t" style="left:819.4px;top:433.67px;font-size:10.9px;line-height:10.9px;color:#000;font-weight:400;">APARNA MEDICAL-SGJSUR0001</div>
<div class="t" style="left:1219.00px;width:90px;text-align:right;top:433.67px;font-size:10.9px;line-height:10.9px;color:#000;font-weight:400;">100.00</div>
<div class="t" style="left:1319.00px;width:90px;text-align:right;top:433.67px;font-size:10.9px;line-height:10.9px;color:#000;font-weight:400;">100.00</div>
<div class="t" style="left:1419.00px;width:90px;text-align:right;top:433.67px;font-size:10.9px;line-height:10.9px;color:#000;font-weight:400;">0.00</div>
<div class="t" style="left:269px;top:455.67px;font-size:10.9px;line-height:10.9px;color:#000;font-weight:400;">232400001</div>
<div class="t" style="left:369px;top:455.67px;font-size:10.9px;line-height:10.9px;color:#000;font-weight:400;">06-04-2023</div>
<div class="t" style="left:469px;top:455.67px;font-size:10.9px;line-height:10.9px;color:#000;font-weight:400;"><span style="letter-spacing:1.6px">+++++</span>cxslfdkgvo</div>
<div class="t" style="left:619px;top:455.67px;font-size:10.9px;line-height:10.9px;color:#000;font-weight:400;">06-04-2023</div>
<div class="t" style="left:719px;top:455.67px;font-size:10.9px;line-height:10.9px;color:#000;font-weight:400;">10</div>
<div class="t" style="left:819.4px;top:455.67px;font-size:10.9px;line-height:10.9px;color:#000;font-weight:400;">Nasreen khalpa</div>
<div class="t" style="left:1219.00px;width:90px;text-align:right;top:455.67px;font-size:10.9px;line-height:10.9px;color:#000;font-weight:400;">50.00</div>
<div class="t" style="left:1319.00px;width:90px;text-align:right;top:455.67px;font-size:10.9px;line-height:10.9px;color:#000;font-weight:400;">50.00</div>
<div class="t" style="left:1419.00px;width:90px;text-align:right;top:455.67px;font-size:10.9px;line-height:10.9px;color:#000;font-weight:400;">0.00</div>
<div class="t" style="left:269px;top:477.67px;font-size:10.9px;line-height:10.9px;color:#000;font-weight:400;">222300013</div>
<div class="t" style="left:369px;top:477.67px;font-size:10.9px;line-height:10.9px;color:#000;font-weight:400;">29-03-2023</div>
<div class="t" style="left:469px;top:477.67px;font-size:10.9px;line-height:10.9px;color:#000;font-weight:400;">157469565</div>
<div class="t" style="left:619px;top:477.67px;font-size:10.9px;line-height:10.9px;color:#000;font-weight:400;">29-03-2023</div>
<div class="t" style="left:719px;top:477.67px;font-size:10.9px;line-height:10.9px;color:#000;font-weight:400;">11</div>
<div class="t" style="left:819.4px;top:477.67px;font-size:10.9px;line-height:10.9px;color:#000;font-weight:400;">Aishvarya Shah</div>
<div class="t" style="left:1219.00px;width:90px;text-align:right;top:477.67px;font-size:10.9px;line-height:10.9px;color:#000;font-weight:400;">500000.00</div>
<div class="t" style="left:1319.00px;width:90px;text-align:right;top:477.67px;font-size:10.9px;line-height:10.9px;color:#000;font-weight:400;">500000.00</div>
<div class="t" style="left:1419.00px;width:90px;text-align:right;top:477.67px;font-size:10.9px;line-height:10.9px;color:#000;font-weight:400;">0.00</div>
<div class="t" style="left:269px;top:499.67px;font-size:10.9px;line-height:10.9px;color:#000;font-weight:400;">222300012</div>
<div class="t" style="left:369px;top:499.67px;font-size:10.9px;line-height:10.9px;color:#000;font-weight:400;">29-03-2023</div>
<div class="t" style="left:469px;top:499.67px;font-size:10.9px;line-height:10.9px;color:#000;font-weight:400;">478874465</div>
<div class="t" style="left:619px;top:499.67px;font-size:10.9px;line-height:10.9px;color:#000;font-weight:400;">29-03-2023</div>
<div class="t" style="left:719px;top:499.67px;font-size:10.9px;line-height:10.9px;color:#000;font-weight:400;">27</div>
<div class="t" style="left:819.4px;top:499.67px;font-size:10.9px;line-height:10.9px;color:#000;font-weight:400;">Krishna</div>
<div class="t" style="left:1219.00px;width:90px;text-align:right;top:499.67px;font-size:10.9px;line-height:10.9px;color:#000;font-weight:400;">10000.00</div>
<div class="t" style="left:1319.00px;width:90px;text-align:right;top:499.67px;font-size:10.9px;line-height:10.9px;color:#000;font-weight:400;">10000.00</div>
<div class="t" style="left:1419.00px;width:90px;text-align:right;top:499.67px;font-size:10.9px;line-height:10.9px;color:#000;font-weight:400;">0.00</div>
<div class="t" style="left:269px;top:521.67px;font-size:10.9px;line-height:10.9px;color:#000;font-weight:400;">222300011</div>
<div class="t" style="left:369px;top:521.67px;font-size:10.9px;line-height:10.9px;color:#000;font-weight:400;">27-12-2022</div>
<div class="t" style="left:469px;top:521.67px;font-size:10.9px;line-height:10.9px;color:#000;font-weight:400;">4984847468746</div>
<div class="t" style="left:619px;top:521.67px;font-size:10.9px;line-height:10.9px;color:#000;font-weight:400;">27-12-2022</div>
<div class="t" style="left:719px;top:521.67px;font-size:10.9px;line-height:10.9px;color:#000;font-weight:400;">6</div>
<div class="t" style="left:819.4px;top:521.67px;font-size:10.9px;line-height:10.9px;color:#000;font-weight:400;">danish</div>
<div class="t" style="left:1219.00px;width:90px;text-align:right;top:521.67px;font-size:10.9px;line-height:10.9px;color:#000;font-weight:400;">2.00</div>
<div class="t" style="left:1319.00px;width:90px;text-align:right;top:521.67px;font-size:10.9px;line-height:10.9px;color:#000;font-weight:400;">2.00</div>
<div class="t" style="left:1419.00px;width:90px;text-align:right;top:521.67px;font-size:10.9px;line-height:10.9px;color:#000;font-weight:400;">0.00</div>
<div class="t" style="left:269px;top:543.67px;font-size:10.9px;line-height:10.9px;color:#000;font-weight:400;">222300009</div>
<div class="t" style="left:369px;top:543.67px;font-size:10.9px;line-height:10.9px;color:#000;font-weight:400;">04-11-2022</div>
<div class="t" style="left:469px;top:543.67px;font-size:10.9px;line-height:10.9px;color:#000;font-weight:400;">142452</div>
<div class="t" style="left:619px;top:543.67px;font-size:10.9px;line-height:10.9px;color:#000;font-weight:400;">04-11-2022</div>
<div class="t" style="left:719px;top:543.67px;font-size:10.9px;line-height:10.9px;color:#000;font-weight:400;">140</div>
<div class="t" style="left:819.4px;top:543.67px;font-size:10.9px;line-height:10.9px;color:#000;font-weight:400;">Nilesh Patel 01</div>
<div class="t" style="left:1219.00px;width:90px;text-align:right;top:543.67px;font-size:10.9px;line-height:10.9px;color:#000;font-weight:400;">500.00</div>
<div class="t" style="left:1319.00px;width:90px;text-align:right;top:543.67px;font-size:10.9px;line-height:10.9px;color:#000;font-weight:400;">500.00</div>
<div class="t" style="left:1419.00px;width:90px;text-align:right;top:543.67px;font-size:10.9px;line-height:10.9px;color:#000;font-weight:400;">0.00</div>
<div class="t" style="left:269px;top:565.67px;font-size:10.9px;line-height:10.9px;color:#000;font-weight:400;">222300007</div>
<div class="t" style="left:369px;top:565.67px;font-size:10.9px;line-height:10.9px;color:#000;font-weight:400;">02-09-2022</div>
<div class="t" style="left:469px;top:565.67px;font-size:10.9px;line-height:10.9px;color:#000;font-weight:400;">000060</div>
<div class="t" style="left:619px;top:565.67px;font-size:10.9px;line-height:10.9px;color:#000;font-weight:400;">02-09-2022</div>
<div class="t" style="left:719px;top:565.67px;font-size:10.9px;line-height:10.9px;color:#000;font-weight:400;">14</div>
<div class="t" style="left:819.4px;top:565.67px;font-size:10.9px;line-height:10.9px;color:#000;font-weight:400;">Pankaj Madrasi</div>
<div class="t" style="left:1219.00px;width:90px;text-align:right;top:565.67px;font-size:10.9px;line-height:10.9px;color:#000;font-weight:400;">200.00</div>
<div class="t" style="left:1319.00px;width:90px;text-align:right;top:565.67px;font-size:10.9px;line-height:10.9px;color:#000;font-weight:400;">200.00</div>
<div class="t" style="left:1419.00px;width:90px;text-align:right;top:565.67px;font-size:10.9px;line-height:10.9px;color:#000;font-weight:400;">0.00</div>
<div class="t" style="left:269px;top:587.67px;font-size:10.9px;line-height:10.9px;color:#000;font-weight:400;">222300006</div>
<div class="t" style="left:369px;top:587.67px;font-size:10.9px;line-height:10.9px;color:#000;font-weight:400;">26-08-2022</div>
<div class="t" style="left:469px;top:587.67px;font-size:10.9px;line-height:10.9px;color:#000;font-weight:400;">Test TRN No 109</div>
<div class="t" style="left:619px;top:587.67px;font-size:10.9px;line-height:10.9px;color:#000;font-weight:400;">01-09-2022</div>
<div class="t" style="left:719px;top:587.67px;font-size:10.9px;line-height:10.9px;color:#000;font-weight:400;">1</div>
<div class="t" style="left:819.4px;top:587.67px;font-size:10.9px;line-height:10.9px;color:#000;font-weight:400;">ZOTA HEALTHCARE LTD-HGJSUR0222</div>
<div class="t" style="left:1219.00px;width:90px;text-align:right;top:587.67px;font-size:10.9px;line-height:10.9px;color:#000;font-weight:400;">2500.00</div>
<div class="t" style="left:1319.00px;width:90px;text-align:right;top:587.67px;font-size:10.9px;line-height:10.9px;color:#000;font-weight:400;">2500.00</div>
<div class="t" style="left:1419.00px;width:90px;text-align:right;top:587.67px;font-size:10.9px;line-height:10.9px;color:#000;font-weight:400;">0.00</div>
<div class="t" style="left:269px;top:609.67px;font-size:10.9px;line-height:10.9px;color:#000;font-weight:400;">222300005</div>
<div class="t" style="left:369px;top:609.67px;font-size:10.9px;line-height:10.9px;color:#000;font-weight:400;">24-08-2022</div>
<div class="t" style="left:469px;top:609.67px;font-size:10.9px;line-height:10.9px;color:#000;font-weight:400;">aa</div>
<div class="t" style="left:619px;top:609.67px;font-size:10.9px;line-height:10.9px;color:#000;font-weight:400;">24-08-2022</div>
<div class="t" style="left:719px;top:609.67px;font-size:10.9px;line-height:10.9px;color:#000;font-weight:400;">8</div>
<div class="t" style="left:819.4px;top:609.67px;font-size:10.9px;line-height:10.9px;color:#000;font-weight:400;">Rohan</div>
<div class="t" style="left:1219.00px;width:90px;text-align:right;top:609.67px;font-size:10.9px;line-height:10.9px;color:#000;font-weight:400;">230000.00</div>
<div class="t" style="left:1319.00px;width:90px;text-align:right;top:609.67px;font-size:10.9px;line-height:10.9px;color:#000;font-weight:400;">230000.00</div>
<div class="t" style="left:1419.00px;width:90px;text-align:right;top:609.67px;font-size:10.9px;line-height:10.9px;color:#000;font-weight:400;">0.00</div>
<div class="t" style="left:269px;top:631.67px;font-size:10.9px;line-height:10.9px;color:#000;font-weight:400;">222300004</div>
<div class="t" style="left:369px;top:631.67px;font-size:10.9px;line-height:10.9px;color:#000;font-weight:400;">23-08-2022</div>
<div class="t" style="left:469px;top:631.67px;font-size:10.9px;line-height:10.9px;color:#000;font-weight:400;">Abcd 123 2</div>
<div class="t" style="left:619px;top:631.67px;font-size:10.9px;line-height:10.9px;color:#000;font-weight:400;">31-08-2022</div>
<div class="t" style="left:719px;top:631.67px;font-size:10.9px;line-height:10.9px;color:#000;font-weight:400;">1</div>
<div class="t" style="left:819.4px;top:631.67px;font-size:10.9px;line-height:10.9px;color:#000;font-weight:400;">ZOTA HEALTHCARE LTD-HGJSUR0222</div>
<div class="t" style="left:1219.00px;width:90px;text-align:right;top:631.67px;font-size:10.9px;line-height:10.9px;color:#000;font-weight:400;">6000.00</div>
<div class="t" style="left:1319.00px;width:90px;text-align:right;top:631.67px;font-size:10.9px;line-height:10.9px;color:#000;font-weight:400;">6000.00</div>
<div class="t" style="left:1419.00px;width:90px;text-align:right;top:631.67px;font-size:10.9px;line-height:10.9px;color:#000;font-weight:400;">0.00</div>
<div class="t" style="left:269px;top:653.67px;font-size:10.9px;line-height:10.9px;color:#000;font-weight:400;">222300003</div>
<div class="t" style="left:369px;top:653.67px;font-size:10.9px;line-height:10.9px;color:#000;font-weight:400;">10-08-2022</div>
<div class="t" style="left:469px;top:653.67px;font-size:10.9px;line-height:10.9px;color:#000;font-weight:400;">123456789</div>
<div class="t" style="left:619px;top:653.67px;font-size:10.9px;line-height:10.9px;color:#000;font-weight:400;">10-08-2022</div>
<div class="t" style="left:719px;top:653.67px;font-size:10.9px;line-height:10.9px;color:#000;font-weight:400;">9</div>
<div class="t" style="left:819.4px;top:653.67px;font-size:10.9px;line-height:10.9px;color:#000;font-weight:400;">pankaj</div>
<div class="t" style="left:1219.00px;width:90px;text-align:right;top:653.67px;font-size:10.9px;line-height:10.9px;color:#000;font-weight:400;">200.00</div>
<div class="t" style="left:1319.00px;width:90px;text-align:right;top:653.67px;font-size:10.9px;line-height:10.9px;color:#000;font-weight:400;">200.00</div>
<div class="t" style="left:1419.00px;width:90px;text-align:right;top:653.67px;font-size:10.9px;line-height:10.9px;color:#000;font-weight:400;">0.00</div>
<div class="t" style="left:269px;top:675.67px;font-size:10.9px;line-height:10.9px;color:#000;font-weight:400;">222300002</div>
<div class="t" style="left:369px;top:675.67px;font-size:10.9px;line-height:10.9px;color:#000;font-weight:400;">30-06-2022</div>
<div class="t" style="left:469px;top:675.67px;font-size:10.9px;line-height:10.9px;color:#000;font-weight:400;">1232456666666</div>
<div class="t" style="left:619px;top:675.67px;font-size:10.9px;line-height:10.9px;color:#000;font-weight:400;">30-06-2022</div>
<div class="t" style="left:719px;top:675.67px;font-size:10.9px;line-height:10.9px;color:#000;font-weight:400;">1</div>
<div class="t" style="left:819.4px;top:675.67px;font-size:10.9px;line-height:10.9px;color:#000;font-weight:400;">ZOTA HEALTHCARE LTD-HGJSUR0222</div>
<div class="t" style="left:1219.00px;width:90px;text-align:right;top:675.67px;font-size:10.9px;line-height:10.9px;color:#000;font-weight:400;">742.00</div>
<div class="t" style="left:1319.00px;width:90px;text-align:right;top:675.67px;font-size:10.9px;line-height:10.9px;color:#000;font-weight:400;">742.00</div>
<div class="t" style="left:1419.00px;width:90px;text-align:right;top:675.67px;font-size:10.9px;line-height:10.9px;color:#000;font-weight:400;">0.00</div>
<div class="t" style="left:269px;top:697.67px;font-size:10.9px;line-height:10.9px;color:#000;font-weight:400;">222300001</div>
<div class="t" style="left:369px;top:697.67px;font-size:10.9px;line-height:10.9px;color:#000;font-weight:400;">27-06-2022</div>
<div class="t" style="left:469px;top:697.67px;font-size:10.9px;line-height:10.9px;color:#000;font-weight:400;">sbi9658</div>
<div class="t" style="left:619px;top:697.67px;font-size:10.9px;line-height:10.9px;color:#000;font-weight:400;">20-06-2022</div>
<div class="t" style="left:719px;top:697.67px;font-size:10.9px;line-height:10.9px;color:#000;font-weight:400;">1</div>
<div class="t" style="left:819.4px;top:697.67px;font-size:10.9px;line-height:10.9px;color:#000;font-weight:400;">ZOTA HEALTHCARE LTD-HGJSUR0222</div>
<div class="t" style="left:1219.00px;width:90px;text-align:right;top:697.67px;font-size:10.9px;line-height:10.9px;color:#000;font-weight:400;">1200.00</div>
<div class="t" style="left:1319.00px;width:90px;text-align:right;top:697.67px;font-size:10.9px;line-height:10.9px;color:#000;font-weight:400;">1200.00</div>
<div class="t" style="left:1419.00px;width:90px;text-align:right;top:697.67px;font-size:10.9px;line-height:10.9px;color:#000;font-weight:400;">0.00</div>
<div class="r" style="left:708px;top:209px;width:120px;height:520px;box-sizing:border-box;border:7px solid #ed1c24;"></div>
<div class="r" style="left:223px;top:954px;width:1682px;height:49px;box-sizing:border-box;border:2px solid #646464;border-top:1px solid #646464;background:#fff"></div>
<div class="r" style="left:676px;top:966px;width:85px;height:25px;box-sizing:border-box;border:1px solid #646464;background:#fff"></div>
<div class="t" style="left:671.50px;width:80px;text-align:right;top:973.18px;font-size:11.6px;line-height:11.6px;color:#000;font-weight:400;">Add</div>
<div class="r" style="left:763px;top:966px;width:85px;height:25px;box-sizing:border-box;border:1px solid #646464;background:#fff"></div>
<div class="t" style="left:758.50px;width:80px;text-align:right;top:973.18px;font-size:11.6px;line-height:11.6px;color:#000;font-weight:400;">Edit</div>
<div class="r" style="left:850px;top:966px;width:85px;height:25px;box-sizing:border-box;border:1px solid #646464;background:#fff"></div>
<div class="t" style="left:845.50px;width:80px;text-align:right;top:973.18px;font-size:11.6px;line-height:11.6px;color:#000;font-weight:400;">Delete</div>
<div class="r" style="left:937px;top:966px;width:85px;height:25px;box-sizing:border-box;border:1px solid #646464;background:#fff"></div>
<div class="t" style="left:933.00px;width:80px;text-align:right;top:973.18px;font-size:11.6px;line-height:11.6px;color:#000;font-weight:400;">View</div>
<div class="r" style="left:1111px;top:966px;width:85px;height:25px;box-sizing:border-box;border:1px solid #646464;background:#fff"></div>
<div class="t" style="left:1141px;top:973.18px;font-size:11.6px;line-height:11.6px;color:#000;font-weight:400;">Print List</div>
<svg class="r" style="left:681px;top:970px" width="18" height="18" viewBox="0 0 18 18"><circle cx="9" cy="9" r="7" fill="#6cbf5f" stroke="#8fd089" stroke-width="1"/><circle cx="9" cy="9" r="5.2" fill="#5fb653" stroke="#d8f0d2" stroke-width="0.8"/><path d="M9 5.5 V12.5 M5.5 9 H12.5" stroke="#fff" stroke-width="2.2"/></svg>
<svg class="r" style="left:767px;top:969px" width="16" height="19" viewBox="0 0 16 19"><path d="M1.5 1.5 H9 L12.5 5 V17.5 H1.5 Z" fill="#fafafa" stroke="#999" stroke-width="1"/><path d="M3.5 6 H9 M3.5 9 H9" stroke="#bbb" stroke-width="1"/><path d="M5 16 L13 8 L15 10 L7 18 L4.5 18.5 Z" fill="#f2b33d" stroke="#c7852a" stroke-width="0.6"/><path d="M13 8 L15 10 L14 11 L12 9 Z" fill="#d9534f"/></svg>
<svg class="r" style="left:856px;top:968px" width="16" height="20" viewBox="0 0 16 20"><rect x="2" y="3.5" width="12" height="2" rx="0.5" fill="#8a8a8a"/><rect x="6" y="1.5" width="4" height="2" fill="#8a8a8a"/><path d="M3 6.5 H13 L12 19 H4 Z" fill="#9a9a9a"/><path d="M6 8 V17.5 M8 8 V17.5 M10 8 V17.5" stroke="#cfcfcf" stroke-width="0.9"/></svg>
<svg class="r" style="left:943px;top:969px" width="18" height="18" viewBox="0 0 18 18"><circle cx="3" cy="3" r="1.8" fill="#333"/><circle cx="3" cy="9" r="1.8" fill="#333"/><circle cx="3" cy="15" r="1.8" fill="#333"/><path d="M7 3 H17 M7 9 H17 M7 15 H17" stroke="#333" stroke-width="1.3"/></svg>
<svg class="r" style="left:1116px;top:969px" width="18" height="18" viewBox="0 0 18 18"><rect x="4.5" y="1" width="9" height="5" fill="#fff" stroke="#777" stroke-width="1"/><rect x="1" y="6" width="16" height="7" rx="1.5" fill="#8c8c8c"/><rect x="4.5" y="11" width="9" height="6" fill="#fff" stroke="#777" stroke-width="1"/><circle cx="14" cy="8.5" r="0.8" fill="#ddd"/></svg>
<div class="r" style="left:0px;top:1018px;width:1920px;height:22px;background:#feece8"></div>
<div class="t" style="left:112px;top:1024.18px;font-size:11.6px;line-height:11.6px;color:#7d2f2b;font-weight:700;">admin (App. Version : 1.38.0)</div>
<div class="t" style="left:472.00px;width:200px;text-align:center;top:1024.18px;font-size:11.6px;line-height:11.6px;color:#7d2f2b;font-weight:700;">17-04-2023</div>
<div class="t" style="left:852.40px;width:200px;text-align:center;top:1024.18px;font-size:11.6px;line-height:11.6px;color:#7d2f2b;font-weight:700;">05:17:11 PM</div>
<div class="t" style="left:1243px;top:1024.18px;font-size:11.6px;line-height:11.6px;color:#7d2f2b;font-weight:700;">Last Login : 17-04-2023 17:02:20</div>
<div class="t" style="left:1611px;top:1024.18px;font-size:11.6px;line-height:11.6px;color:#7d2f2b;font-weight:700;">Last Sync Time : 17-04-2023 17:13:24</div>
<div class="r" style="left:0;top:1040px;width:1920px;height:40px;background:linear-gradient(90deg,#3b3b3b 0%,#3b3b3b 78%,#2c3440 83%,#1d2a3e 90%,#1b2a40 100%)"></div>
<div class="r" style="left:0px;top:1040px;width:48px;height:40px;background:#1f333d"></div>
<svg class="r" style="left:16px;top:1052px" width="17" height="17" viewBox="0 0 17 17"><path d="M0 2.3 L7 1.3 V7.7 H0 Z M8 1.1 L16.5 0 V7.7 H8 Z M0 8.7 H7 V15.2 L0 14.2 Z M8 8.7 H16.5 V16.5 L8 15.3 Z" fill="#fff"/></svg>
<div class="r" style="left:48px;top:1040px;width:288px;height:40px;background:#f0f0f0;box-sizing:border-box;border:1px solid #c8c8c8;border-bottom:2px solid #cfcfcf"></div>
<svg class="r" style="left:59px;top:1051px" width="18" height="18" viewBox="0 0 18 18"><circle cx="11" cy="7" r="5.5" fill="none" stroke="#222" stroke-width="1.2"/><path d="M7 11 L1 17" stroke="#222" stroke-width="1.4"/></svg>
<div class="t" style="left:88px;top:1053.81px;font-size:14.4px;line-height:14.4px;color:#333;font-weight:400;">Type here to search</div>
<svg class="r" style="left:294px;top:1045px" width="30" height="30" viewBox="0 0 30 30"><path d="M15 1.5 A13 13 0 1 1 7 25.5 L3 28 L3.5 22 A13 13 0 0 1 15 1.5 Z" fill="#fff" stroke="#1f7be0" stroke-width="1.4"/><path d="M11 7 V21 L19 17 Q21 15 19 13 L14 11.5" fill="none" stroke="#1672dd" stroke-width="3" stroke-linejoin="round"/></svg>
<svg class="r" style="left:350px;top:1050px" width="20" height="19" viewBox="0 0 20 19"><path d="M2.5 3.5 V2.5 H13.5 V3.5 M2.5 15.5 V16.5 H13.5 V15.5" fill="none" stroke="#fff" stroke-width="1.1"/><rect x="2.5" y="6.5" width="11" height="5.5" fill="none" stroke="#fff" stroke-width="1.1"/><path d="M17 1.5 V17.5" stroke="#fff" stroke-width="1.1"/><rect x="15.5" y="5.7" width="3" height="3" fill="#fff"/></svg>
<svg class="r" style="left:398px;top:1047px" width="26" height="26" viewBox="0 0 26 26"><defs><linearGradient id="eg" x1="0" y1="0" x2="1" y2="0.6"><stop offset="0" stop-color="#2fb6f0"/><stop offset="0.5" stop-color="#2ec5c8"/><stop offset="1" stop-color="#6ee06a"/></linearGradient><linearGradient id="eb" x1="0" y1="0" x2="0.4" y2="1"><stop offset="0" stop-color="#1f95ea"/><stop offset="1" stop-color="#1660c2"/></linearGradient></defs><circle cx="13" cy="12.8" r="12" fill="url(#eg)"/><path d="M1 12 Q2.5 6 9.5 6.5 Q5 9 5.5 14 Q6 18.5 11 18.5 H23.5 Q23 21 20 23.2 Q16.5 25.2 12.5 24.8 Q1.5 24 1 13 Z" fill="url(#eb)"/><path d="M5.5 14.5 Q5 8.5 10.5 7.8 Q14.5 7.5 15.5 11 Q11.5 9.8 10 12.5 Q8.5 16.5 11.5 20 Q14.5 23 19.5 22.2 Q17 24.6 13.5 24.4 Q6 23.6 5.5 14.5 Z" fill="#0f55b0"/><ellipse cx="12.8" cy="12.6" rx="2.6" ry="2.2" fill="#3b3b3b"/><path d="M14 15.6 Q18 16.4 23.8 15.8 L23.6 18.3 H14.5 Q13.5 17 14 15.6 Z" fill="#3b3b3b"/></svg>
<svg class="r" style="left:448px;top:1050px" width="24" height="20" viewBox="0 0 24 20"><path d="M1 1.5 Q1 0.8 1.8 0.8 H9 L10.5 2.5 H21.5 Q22.5 2.5 22.5 3.5 V17.5 H1 Z" fill="#fcd468"/><path d="M1 0.8 H9 L10.5 2.5 H1 Z" fill="#e6a323"/><rect x="1" y="3.5" width="21.5" height="14" fill="#fdd873"/><path d="M5 19.5 V11 H19.5 V19.5 H15.5 V14.5 H9 V19.5 Z" fill="#3f8fe0"/></svg>
<svg class="r" style="left:496px;top:1048px" width="25" height="24" viewBox="0 0 25 24"><path d="M0.5 7 L12.5 0.5 L24.5 7 Z" fill="#0f5fb0"/><rect x="0.5" y="7" width="24" height="16.5" fill="#2ea8ec"/><path d="M0.5 7 H24.5 L12.5 14 Z" fill="#fff"/><path d="M0.5 7 L0.5 23.5 L12.5 13 Z" fill="#1a8fde"/><path d="M24.5 7 L24.5 23.5 L12.5 13 Z" fill="#48c2f5"/><path d="M0.5 23.5 L12.5 14 L24.5 23.5 Z" fill="#2096e2"/></svg>
<svg class="r" style="left:546px;top:1048px" width="24" height="24" viewBox="0 0 24 24"><path d="M7 6 V3 Q7 1 9 1 H15 Q17 1 17 3 V6" fill="none" stroke="#2ab0f0" stroke-width="1.8"/><rect x="1" y="5" width="22" height="18" rx="2.5" fill="#f2f2f2"/><rect x="7" y="9" width="4.5" height="4.5" fill="#f25022"/><rect x="12.5" y="9" width="4.5" height="4.5" fill="#7fba00"/><rect x="7" y="14.5" width="4.5" height="4.5" fill="#00a4ef"/><rect x="12.5" y="14.5" width="4.5" height="4.5" fill="#ffb900"/></svg>
<svg class="r" style="left:595px;top:1047px" width="26" height="26" viewBox="0 0 26 26"><circle cx="13" cy="13" r="12.5" fill="#db4437"/><path d="M13 13 L2.2 19.2 A12.5 12.5 0 0 0 19.2 23.8 Z" fill="#0f9d58"/><path d="M13 13 L19.2 23.8 A12.5 12.5 0 0 0 24.5 7 L13 7 Z" fill="#ffcd40"/><circle cx="13" cy="13" r="5.7" fill="#fff"/><circle cx="13" cy="13" r="4.5" fill="#4285f4"/></svg>
<svg class="r" style="left:644px;top:1048px" width="24" height="24" viewBox="0 0 24 24"><circle cx="7" cy="7" r="6" fill="#0b8ad6"/><circle cx="17" cy="17" r="6" fill="#0b8ad6"/><circle cx="12" cy="12" r="10" fill="#18a0e8"/><text x="12" y="17.5" font-family="Liberation Sans" font-size="15" font-weight="700" fill="#fff" text-anchor="middle">S</text></svg>
<svg class="r" style="left:693px;top:1048px" width="22" height="24" viewBox="0 0 22 24"><path d="M4 2 L19 1 L21 20 L6 23 Z" fill="#f0f0f0" stroke="#9fb3c0" stroke-width="0.8"/><path d="M2 4 L16 2.5 L18 21 L4 23 Z" fill="url(#np)"/><defs><linearGradient id="np" x1="0" y1="0" x2="1" y2="1"><stop offset="0" stop-color="#dff3f7"/><stop offset="1" stop-color="#4f9fb1"/></linearGradient></defs><path d="M3 4 L17 2.5" stroke="#6a8a99" stroke-width="1.2" stroke-dasharray="1.2 1"/></svg>
<svg class="r" style="left:742px;top:1047px" width="22" height="26" viewBox="0 0 22 26"><path d="M4 4 Q12 -2 18 5 Q22 12 16 17" fill="none" stroke="#d83b01" stroke-width="2.5"/><path d="M9 2 L11 16 M13 3 L12 16" stroke="#ddd" stroke-width="2"/><circle cx="5" cy="20" r="3" fill="none" stroke="#0a78d8" stroke-width="2"/><circle cx="11" cy="22" r="3" fill="none" stroke="#0a78d8" stroke-width="2"/></svg>
<svg class="r" style="left:792px;top:1047px" width="20" height="26" viewBox="0 0 20 26"><defs><linearGradient id="pd" x1="0" y1="0" x2="0" y2="1"><stop offset="0" stop-color="#f6c22d"/><stop offset="0.3" stop-color="#ec5b9a"/><stop offset="0.6" stop-color="#9b6ad9"/><stop offset="1" stop-color="#23a3ee"/></linearGradient></defs><path d="M10 1 Q20 12 18.5 18 Q17 25 10 25 Q3 25 1.5 18 Q0.5 12 10 1 Z" fill="url(#pd)"/></svg>
<div class="r" style="left:828px;top:1040px;width:48px;height:40px;background:#6b6b6b"></div>
<svg class="r" style="left:840px;top:1047px" width="25" height="26" viewBox="0 0 25 26"><path d="M1 11 H8 V14 H5 V16 Q5 22 12.5 22 Q20 22 20 16 V12 L23.5 11 V16.5 Q23.5 25 12.5 25 Q1 25 1 16.5 Z" fill="#e9621f"/><path d="M10 18 L19 5" stroke="#4b5e22" stroke-width="3" stroke-linecap="round"/><rect x="19" y="0.5" width="4" height="2.5" fill="#4b5e22" transform="rotate(-20 21 2)"/></svg>
<svg class="r" style="left:889px;top:1048px" width="24" height="24" viewBox="0 0 24 24"><rect x="9" y="2" width="14" height="20" fill="#fff" stroke="#1d6f42" stroke-width="1"/><path d="M12 6 H21 M12 10 H21 M12 14 H21 M12 18 H21 M16 3 V21" stroke="#1d6f42" stroke-width="0.8"/><path d="M0.5 3.5 L14 1 V23 L0.5 20.5 Z" fill="#1d6f42"/><text x="7" y="16" font-family="Liberation Sans" font-size="10" font-weight="700" fill="#fff" text-anchor="middle">X</text></svg>
<div class="r" style="left:440px;top:1078px;width:31px;height:2px;background:#76b9ed"></div>
<div class="r" style="left:472px;top:1078px;width:8px;height:2px;background:#76b9ed"></div>
<div class="r" style="left:587px;top:1078px;width:40px;height:2px;background:#76b9ed"></div>
<div class="r" style="left:636px;top:1078px;width:40px;height:2px;background:#76b9ed"></div>
<div class="r" style="left:685px;top:1078px;width:31px;height:2px;background:#76b9ed"></div>
<div class="r" style="left:717px;top:1078px;width:8px;height:2px;background:#76b9ed"></div>
<div class="r" style="left:734px;top:1078px;width:40px;height:2px;background:#76b9ed"></div>
<div class="r" style="left:783px;top:1078px;width:31px;height:2px;background:#76b9ed"></div>
<div class="r" style="left:815px;top:1078px;width:8px;height:2px;background:#76b9ed"></div>
<div class="r" style="left:828px;top:1078px;width:48px;height:2px;background:#76b9ed"></div>
<div class="r" style="left:881px;top:1078px;width:40px;height:2px;background:#76b9ed"></div>
<svg class="r" style="left:1515px;top:1049px" width="22" height="22" viewBox="0 0 22 22"><defs><radialGradient id="sun" cx="0.35" cy="0.3" r="0.8"><stop offset="0" stop-color="#ffc83a"/><stop offset="1" stop-color="#f06a10"/></radialGradient></defs><circle cx="11" cy="11" r="10" fill="url(#sun)"/></svg>
<div class="t" style="left:1546px;top:1052.98px;font-size:14.2px;line-height:14.2px;color:#fff;font-weight:400;letter-spacing:-0.4px">39°C  Sunny</div>
<svg class="r" style="left:1645px;top:1054px" width="16" height="12" viewBox="0 0 16 12"><path d="M1.5 9 L8 2.5 L14.5 9" fill="none" stroke="#fff" stroke-width="1.3"/></svg>
<svg class="r" style="left:1668px;top:1053.5px" width="18" height="12" viewBox="0 0 18 12"><path d="M3 11 Q0 11 0.5 8 Q1 5.5 4 6 Q5 2 9 2 Q13 2 13.5 5.5 Q17.5 5.5 17.5 8.5 Q17.5 11 15 11 Z" fill="#dcdcdc"/></svg>
<svg class="r" style="left:1692px;top:1051.5px" width="18" height="17" viewBox="0 0 18 17"><rect x="1.5" y="2" width="14" height="12" fill="none" stroke="#fff" stroke-width="1.1"/><path d="M6 6 Q8 4 10 6 M10 9 Q8 11 6 9" fill="none" stroke="#fff" stroke-width="1"/><circle cx="13.5" cy="13.5" r="2.8" fill="#f7900a"/></svg>
<svg class="r" style="left:1717px;top:1052px" width="17" height="16" viewBox="0 0 17 16"><rect x="4.5" y="3.5" width="12" height="8" fill="none" stroke="#fff" stroke-width="1.1"/><path d="M10.5 11.5 V14.5 M7 14.5 H14 M1 1 H4 V6 H1 Z" fill="none" stroke="#fff" stroke-width="1.1"/></svg>
<svg class="r" style="left:1741px;top:1052px" width="17" height="16" viewBox="0 0 17 16"><path d="M1 6 H4 L8 2 V14 L4 10 H1 Z" fill="none" stroke="#fff" stroke-width="1.1"/><path d="M10 5.5 Q11.5 8 10 10.5 M12 3.5 Q15 8 12 12.5 M14 1.5 Q18.5 8 14 14.5" fill="none" stroke="#fff" stroke-width="1.1"/></svg>
<div class="t" style="left:1767px;top:1053.80px;font-size:12.4px;line-height:12.4px;color:#fff;font-weight:400;letter-spacing:-1.2px">ENG</div>
<div class="t" style="left:1781.90px;width:100px;text-align:center;top:1044.63px;font-size:12.6px;line-height:12.6px;color:#fff;font-weight:400;letter-spacing:-0.5px">17:17</div>
<div class="t" style="left:1781.90px;width:100px;text-align:center;top:1062.53px;font-size:12.6px;line-height:12.6px;color:#fff;font-weight:400;letter-spacing:-0.7px">17-04-2023</div>
<svg class="r" style="left:1876px;top:1049px" width="30" height="28" viewBox="0 0 30 28"><path d="M3 2.5 H19 V14.5 H9 L6 17 V14.5 H3 Z" fill="#fff"/><path d="M6 6 H16 M6 9 H16 M6 12 H12" stroke="#1c2a44" stroke-width="1"/><circle cx="18.5" cy="18.2" r="8.2" fill="#2a2a2a" stroke="#8a8a8a" stroke-width="1"/><text x="18.5" y="22.3" font-family="Liberation Sans" font-size="11.5" font-weight="700" fill="#fff" text-anchor="middle">21</text></svg>
<div class="r" style="left:1915px;top:1040px;width:1px;height:40px;background:#6a7080"></div>
</body></html>
